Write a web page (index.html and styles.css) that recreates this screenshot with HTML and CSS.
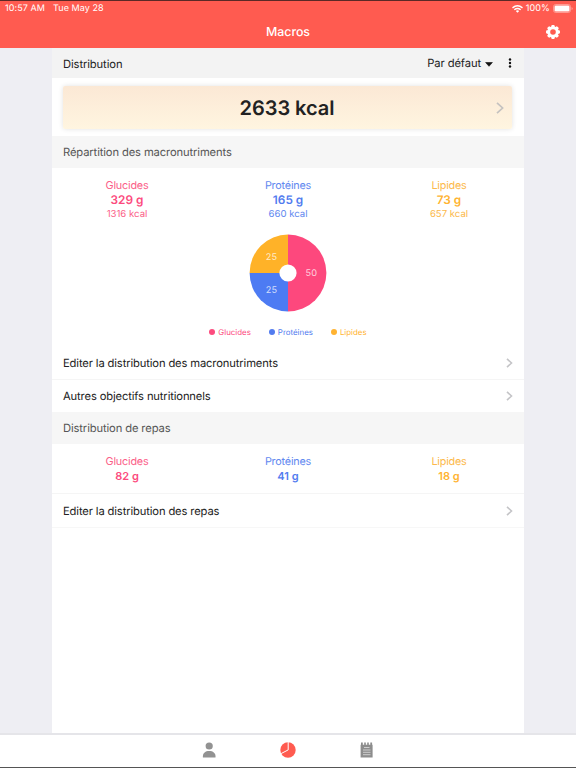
FILE: index.html
```html
<!DOCTYPE html>
<html lang="fr">
<head>
<meta charset="utf-8">
<title>Macros</title>
<link rel="stylesheet" href="styles.css">
</head>
<body>
<header class="top">
  <div class="status">
    <span class="time">10:57 AM</span><span class="date">Tue May 28</span>
    <svg class="wifi" width="11" height="8" viewBox="0 0 11 8" fill="none" stroke="#fff" stroke-width="1.4"><path d="M.5 2.9Q5.5-1.3 10.5 2.9M2.3 4.8Q5.5 2.2 8.7 4.8"/><path d="M3.8 6Q5.5 4.7 7.2 6L5.5 7.8Z" fill="#fff" stroke="none"/></svg>
    <span class="percent">100%</span>
    <svg class="battery" width="20" height="9" viewBox="0 0 20 9"><rect x=".5" y=".5" width="17" height="8" rx="2.2" fill="none" stroke="#ffaaa2" stroke-width=".8"/><rect x="1.5" y="1.5" width="15" height="6" rx="1.3" fill="#fff"/><path d="M18.6 3v3q1-.5 1-1.5t-1-1.5" fill="#ffaaa2"/></svg>
  </div>
  <div class="nav">
    <h1>Macros</h1>
    <svg class="gear" width="14" height="14" viewBox="0 0 14 14"><g fill="#fff"><circle cx="7" cy="7" r="5.7"/><rect x="5.3" y="0" width="3.4" height="14" rx="1.1"/><rect x="5.3" y="0" width="3.4" height="14" rx="1.1" transform="rotate(45 7 7)"/><rect x="5.3" y="0" width="3.4" height="14" rx="1.1" transform="rotate(90 7 7)"/><rect x="5.3" y="0" width="3.4" height="14" rx="1.1" transform="rotate(135 7 7)"/></g><circle cx="7" cy="7" r="2.8" fill="#ff5b50"/></svg>
  </div>
</header>
<main class="page">
  <div class="toolbar">
    <span>Distribution</span>
    <span class="preset">Par défaut</span>
    <svg class="caret" width="8" height="5" viewBox="0 0 8 5"><path d="M.6.5h6.8L4 4.3Z" fill="#111" stroke="#111" stroke-width=".6" stroke-linejoin="round"/></svg>
    <svg class="dots" width="4" height="10" viewBox="0 0 4 10" fill="#111"><circle cx="2" cy="1.5" r="1.2"/><circle cx="2" cy="5" r="1.2"/><circle cx="2" cy="8.5" r="1.2"/></svg>
  </div>
  <div class="total-wrap">
    <div class="total"><strong>2633 kcal</strong>
      <svg class="total-arrow" width="8" height="12" viewBox="0 0 8 12"><path d="M1 .8 6.6 6 1 11.2" fill="none" stroke="#c5c2c0" stroke-width="1.7"/></svg>
    </div>
  </div>
  <h2>Répartition des macronutriments</h2>
  <section class="macros">
    <div class="columns">
      <div class="macro pink"><span>Glucides</span><b>329 g</b><small>1316 kcal</small></div>
      <div class="macro blue"><span>Protéines</span><b>165 g</b><small>660 kcal</small></div>
      <div class="macro gold"><span>Lipides</span><b>73 g</b><small>657 kcal</small></div>
    </div>
    <svg class="pie" width="78" height="78" viewBox="0 0 78 78">
      <path d="M39 39V.6a38.4 38.4 0 0 1 0 76.8Z" fill="#fd487d"/>
      <path d="M39 39v38.4A38.4 38.4 0 0 1 .6 39Z" fill="#4d7bf3"/>
      <path d="M39 39H.6A38.4 38.4 0 0 1 39 .6Z" fill="#ffb228"/>
      <circle cx="39" cy="39" r="8.6" fill="#fff"/>
      <g class="pie-label"><text x="62.3" y="42.3">50</text><text x="22.4" y="26">25</text><text x="22.4" y="58.8">25</text></g>
    </svg>
    <div class="legend"><span class="pink">Glucides</span><span class="blue">Protéines</span><span class="gold">Lipides</span></div>
  </section>
  <div class="row">
    <span>Editer la distribution des macronutriments</span>
    <svg width="7" height="10" viewBox="0 0 7 10"><path d="M1 .8 5.5 5 1 9.2" fill="none" stroke="#c4c4c7" stroke-width="1.6"/></svg>
  </div>
  <div class="row other">
    <span>Autres objectifs nutritionnels</span>
    <svg width="7" height="10" viewBox="0 0 7 10"><path d="M1 .8 5.5 5 1 9.2" fill="none" stroke="#c4c4c7" stroke-width="1.6"/></svg>
  </div>
  <h2>Distribution de repas</h2>
  <section class="meals">
    <div class="columns">
      <div class="macro pink"><span>Glucides</span><b>82 g</b></div>
      <div class="macro blue"><span>Protéines</span><b>41 g</b></div>
      <div class="macro gold"><span>Lipides</span><b>18 g</b></div>
    </div>
  </section>
  <div class="row last">
    <span>Editer la distribution des repas</span>
    <svg width="7" height="10" viewBox="0 0 7 10"><path d="M1 .8 5.5 5 1 9.2" fill="none" stroke="#c4c4c7" stroke-width="1.6"/></svg>
  </div>
</main>
<nav class="tabs">
  <svg width="16" height="16" viewBox="0 0 16 16" fill="#929292"><circle cx="8.2" cy="4" r="3.6"/><path d="M1.9 15.4v-1.2c0-3.2 2.5-5.2 6.3-5.2s6.3 2 6.3 5.2v1.2Z"/></svg>
  <svg width="16" height="16" viewBox="0 0 16 16"><circle cx="8" cy="8" r="7.7" fill="#ff5b50"/><path d="M8.2 0v7.9L1.1 11.6" fill="none" stroke="#fff" stroke-width="1"/></svg>
  <svg width="16" height="16" viewBox="0 0 16 16"><path d="M1.6 2.8h12v12.6h-12ZM2 .4h1.8V3H2Zm3.2 0h1.6V3H5.2Zm3 0h1.6V3H8.2Zm3.1 0h1.8V3h-1.8Z" fill="#8d8d8d"/><path d="M5 5.5h5.5M4 8h7.5M4 10.3h7.5M4 12.7h7.5" stroke="#ddd" stroke-width=".8"/></svg>
</nav>
</body>
</html>
```
FILE: styles.css
```css
* { box-sizing: border-box; }
body {
  margin: 0;
  width: 576px;
  height: 768px;
  overflow: hidden;
  display: flex;
  flex-direction: column;
  background: #eeeef3;
  color: #222;
  font: 11px/14px Inter, "Liberation Sans", sans-serif;
  text-rendering: geometricPrecision;
}
svg { display: block; flex: none; }
h1, h2 { margin: 0; font-weight: 400; }
.top { height: 48px; background: #ff5b50; border-top: 1px solid #5b2926; color: #fff; }
.status { height: 15px; display: flex; align-items: center; padding: 0 3px 0 5px; font-size: 9px; letter-spacing: .08px; }
.date { margin-left: 8px; }
.wifi { margin-left: auto; }
.percent { margin: 0 3px 0 3px; }
.nav { height: 32px; display: grid; grid-template-columns: 1fr auto 1fr; align-items: center; padding: 0 16px; }
.nav h1 { grid-column: 2; font-size: 12.4px; font-weight: 500; letter-spacing: -.03px; }
.gear { justify-self: end; }
.page { width: 472px; height: 685px; margin: 0 auto; background: #fff; flex: none; }
.toolbar { height: 30px; background: #f3f3f3; display: flex; align-items: center; padding: 2px 12px 0 11px; font-size: 11.2px; letter-spacing: -.1px; }
.preset { margin-left: auto; margin-top: -2px; }
.caret { margin-left: 4px; }
.dots { margin-left: 15px; margin-top: -2px; }
.total-wrap { height: 58px; padding: 8px 12px 7px 11px; }
.total { height: 43px; display: grid; grid-template-columns: 1fr auto 1fr; align-items: center; padding: 0 8px 0 7px; background: linear-gradient(#fbe8d5, #fff5e0); border-radius: 2px; box-shadow: 0 0 5px rgba(0, 0, 0, .12); }
.total strong { grid-column: 2; font-size: 20px; line-height: 24px; font-weight: 600; letter-spacing: -.05px; }
.total-arrow { justify-self: end; }
h2 { height: 32px; padding: 0 11px; background: #f6f6f6; color: #555; font-size: 11.2px; line-height: 32px; letter-spacing: -.12px; }
.macros { height: 178px; padding-top: 10px; }
.columns { display: grid; grid-template-columns: repeat(3, 100px); column-gap: 61px; justify-content: center; text-align: center; }
.macro { display: flex; flex-direction: column; }
.macro span { font-size: 10.8px; line-height: 15px; letter-spacing: -.2px; }
.macro b { font-size: 11.8px; line-height: 15px; font-weight: 600; }
.macro small { font-size: 9.6px; line-height: 14px; }
.pink { color: #fc4b7e; }
.blue { color: #527cef; }
.gold { color: #ffb331; }
.macro.pink span, .macro.pink small { color: #fb5f89; }
.macro.blue span, .macro.blue small { color: #6288f0; }
.macro.gold span, .macro.gold small { color: #fcb94b; }
.pie { margin: 12px auto 0; }
.pie-label { font-size: 9.2px; fill: #fff; fill-opacity: .75; text-anchor: middle; }
.legend { display: flex; justify-content: center; gap: 18px; margin-top: 13px; font-size: 7.9px; }
.legend span { display: flex; align-items: center; gap: 3px; }
.legend span::before { content: ""; width: 6px; height: 6px; border-radius: 50%; background: currentColor; }
.row { height: 33px; display: flex; align-items: center; justify-content: space-between; padding: 0 11px; font-size: 11.2px; letter-spacing: -.13px; }
.other { border-top: 1px solid #f5f5f5; }
.meals { height: 49px; padding-top: 10px; }
.meals .macro b { font-size: 11px; line-height: 14px; }
.last { height: 35px; border-top: 1px solid #f5f5f5; border-bottom: 1px solid #f7f7f7; }
.tabs { height: 35px; background: #fff; border-top: 2px solid #e5e5e9; border-bottom: 1px solid #555; display: flex; justify-content: center; align-items: center; gap: 63px; padding-bottom: 2px; }
```
